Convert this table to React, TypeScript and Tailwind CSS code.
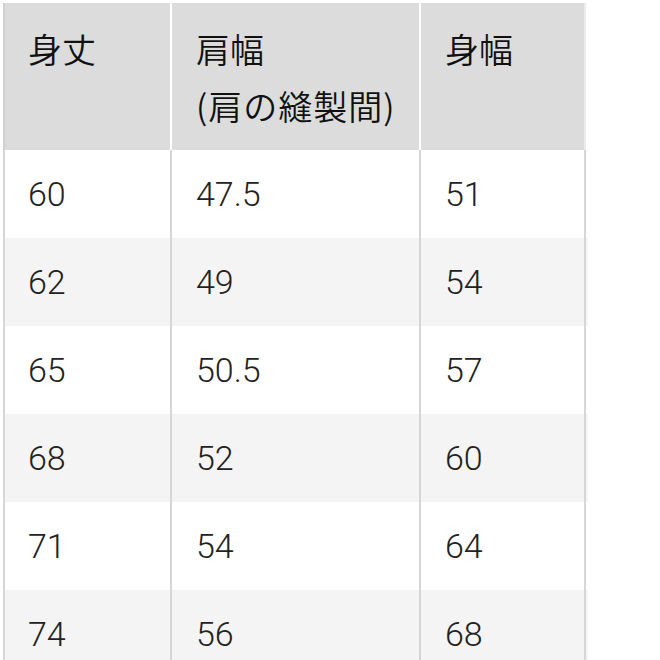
const rows = [
  ["60", "47.5", "51"],
  ["62", "49", "54"],
  ["65", "50.5", "57"],
  ["68", "52", "60"],
  ["71", "54", "64"],
  ["74", "56", "68"],
];

const cols = "grid grid-cols-[167px_249px_167px]";

export default function App() {
  return (
    <div className="min-h-screen w-[660px] bg-white pl-[3px] pt-[3px] overflow-hidden" style={{ fontFamily: '"Noto Sans CJK JP", "Noto Sans", sans-serif' }}>
      <div className="w-[585px]">
        <div className={`${cols} h-[147px] text-[34px] font-[350] leading-[57px] text-[#111]`}>
          <div className="border-l-2 border-[#d0d0d0] bg-[#dcdcdc] pl-[23px] pt-[17px]">身丈</div>
          <div className="border-l-2 border-white bg-[#dcdcdc] pl-[24px] pt-[17px]">
            <div>肩幅</div>
            <div className="tracking-[1px]">(肩の縫製間)</div>
          </div>
          <div className="border-l-2 border-white border-r-2 border-r-[#ececec] bg-[#dcdcdc] pl-[24px] pt-[17px]">身幅</div>
        </div>
        {rows.map((r, i) => (
          <div key={i} className={`${cols} h-[88px] ${i % 2 === 1 ? "bg-[#f4f4f4]" : "bg-white"}`}>
            {r.map((v, j) => (
              <div
                key={j}
                className={`flex items-center border-l-2 border-[#d6d6d6] font-['Roboto',sans-serif] text-[34px] font-light text-[#222] ${j === 0 ? "pl-[23px]" : "pl-[24px]"} ${j === 2 ? "border-r-2 border-r-[#d6d6d6]" : ""}`}
              >
                {v}
              </div>
            ))}
          </div>
        ))}
      </div>
    </div>
  );
}
